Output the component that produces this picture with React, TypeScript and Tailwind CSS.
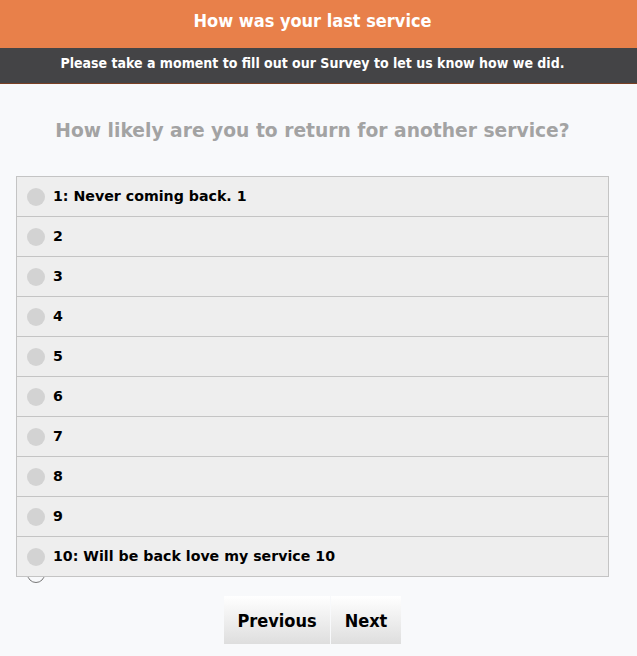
const options = [
  "1: Never coming back. 1",
  "2",
  "3",
  "4",
  "5",
  "6",
  "7",
  "8",
  "9",
  "10: Will be back love my service 10",
];

const tahoma = { fontFamily: '"DejaVu Sans Condensed", "DejaVu Sans", sans-serif' };

export default function App() {
  return (
    <div className="min-h-[656px] bg-[#f8f9fb] font-['DejaVu_Sans',sans-serif]">
      <header>
        <div className="h-12 bg-[#e8804a] flex justify-center pr-3 pt-[8px]">
          <h1 className="text-white font-bold text-[18px] leading-[26px] font-['DejaVu_Sans_Condensed',sans-serif]">
            How was your last service
          </h1>
        </div>
        <div className="h-9 bg-[#444446] border-b border-[#7a4024] flex justify-center pr-3 pt-[5px]">
          <p className="text-white font-bold text-[14px] leading-[20px] font-['DejaVu_Sans_Condensed',sans-serif]">
            Please take a moment to fill out our Survey to let us know how we did.
          </p>
        </div>
      </header>

      <h2 className="pt-[34px] pr-3 text-center text-[18.7px] leading-[26px] font-bold text-[#a3a3a3]">
        How likely are you to return for another service?
      </h2>

      <div className="relative ml-4 mt-[32px] w-[593px]">
        <span className="absolute left-[11px] bottom-[-6px] w-[18px] h-[18px] rounded-full border border-[#777] bg-[#f8f9fb]" />
        <ul className="relative border border-[#c4c4c4] bg-[#eeeeee]">
          {options.map((o, i) => (
            <li
              key={o}
              className={`flex items-center pl-[10px] gap-[8px] ${i > 0 ? "h-10 border-t border-[#c4c4c4]" : "h-[39px]"}`}
            >
              <span className="w-[18px] h-[18px] rounded-full bg-[#d3d3d3]" />
              <span className="text-[14.2px] font-bold text-black">{o}</span>
            </li>
          ))}
        </ul>
      </div>

      <div className="flex justify-center pr-3 mt-[19px]">
        <button
          style={tahoma}
          className="h-12 w-[106px] bg-gradient-to-b from-white to-[#dedede] text-[18px] font-bold text-black"
        >
          Previous
        </button>
        <button
          style={tahoma}
          className="h-12 w-[70px] ml-px bg-gradient-to-b from-white to-[#dedede] text-[18px] font-bold text-black"
        >
          Next
        </button>
      </div>
    </div>
  );
}
